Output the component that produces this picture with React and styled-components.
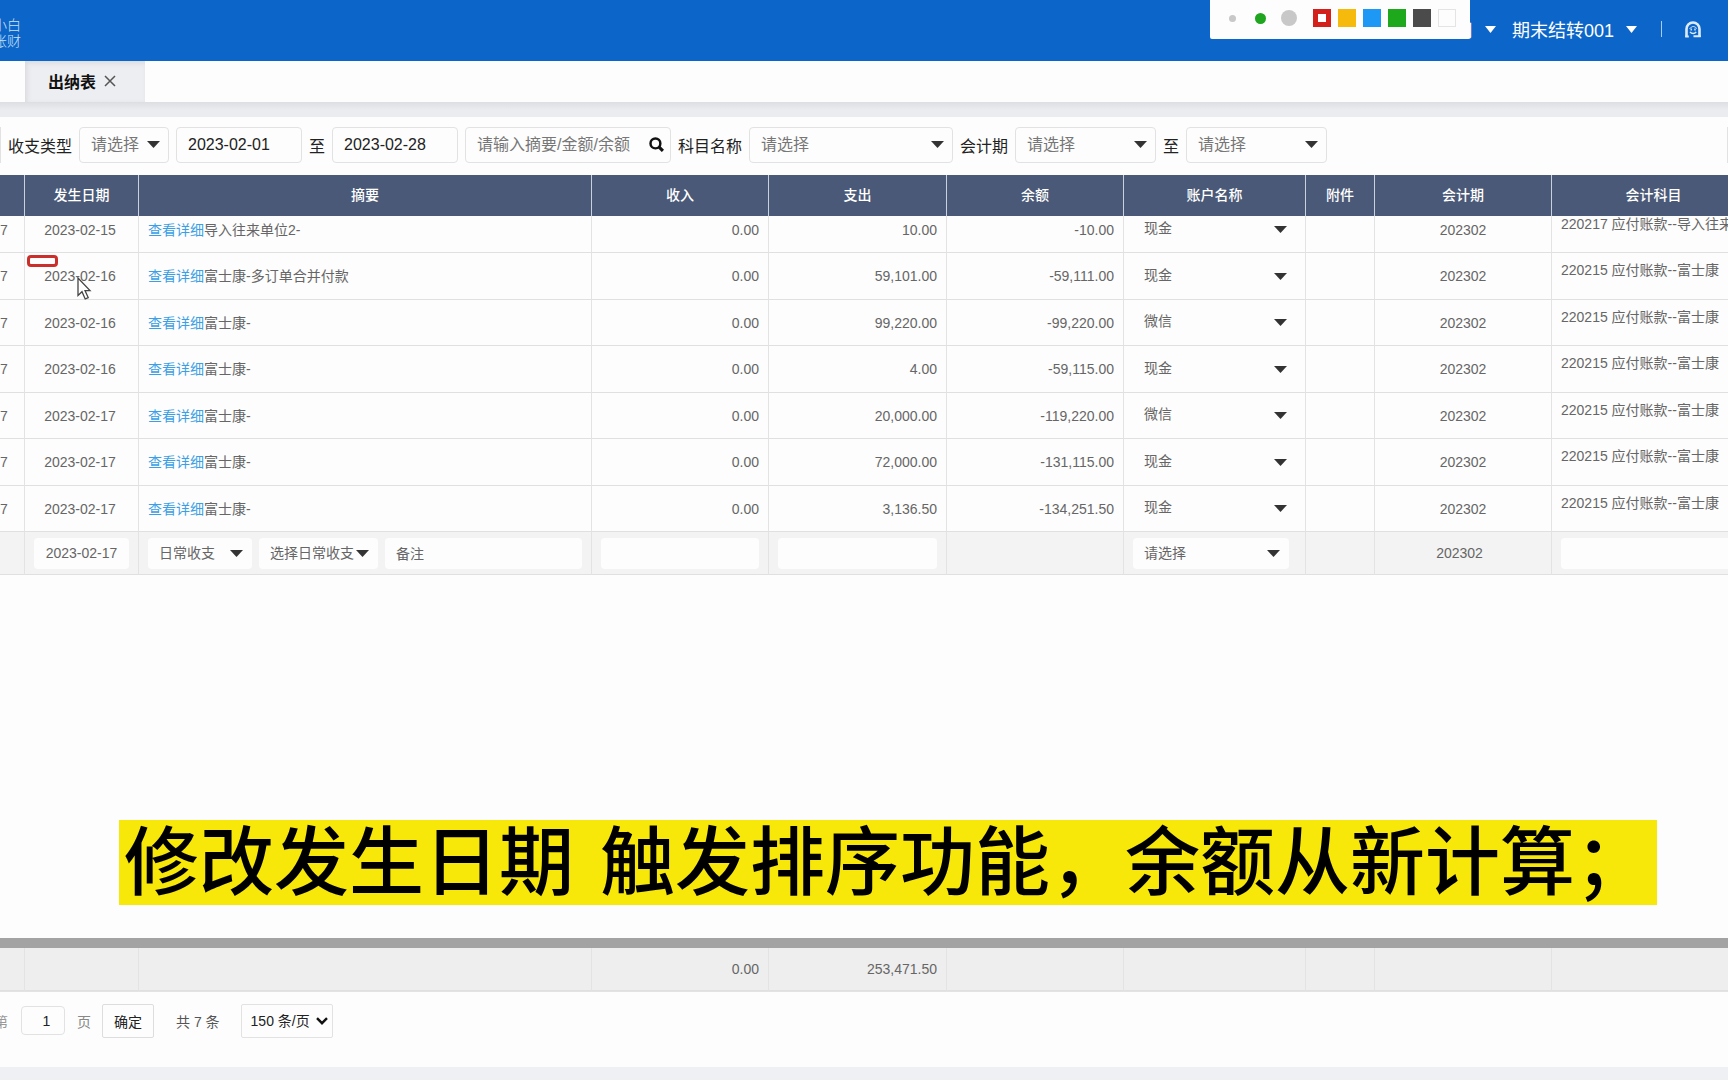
import React from 'react';
import styled, { createGlobalStyle } from 'styled-components';

const GlobalStyle = createGlobalStyle`
* { box-sizing: border-box; }

body {
  margin: 0;
  background: #eef0f3;
  overflow: hidden;
}

body, input, select, button {
  font-family: "Liberation Sans", "Noto Sans CJK SC", sans-serif;
}
`

const Page = styled.div`
position: relative;
display: flex;
flex-direction: column;
min-height: 100vh;
padding-bottom: 13px;
overflow: hidden;
font-size: 14px;
color: #666;
`

const TopBar = styled.header`
display: flex;
align-items: center;
height: 61px;
padding: 0 26px 3px 0;
background: #0c65c8;
color: #fff;
`

const Logo = styled.div`
display: flex;
justify-content: flex-end;
width: 21px;
margin-top: 8px;
overflow: hidden;
font-size: 14px;
font-weight: 300;
line-height: 16px;
white-space: nowrap;
color: #cfe2f8;
`

const UserArea = styled.div`
display: flex;
align-items: center;
margin-left: auto;
font-size: 18px;
line-height: 24px;
`

const MenuButton = styled.button`
display: flex;
align-items: center;
gap: 12px;
margin-right: 16px;
padding: 0;
border: 0;
background: none;
font-size: 18px;
color: #fff;
`

const Divider = styled.span`
width: 1px;
height: 16px;
margin: 0 22px 0 8px;
background: #a9cbf0;
`

const Palette = styled.div`
position: absolute;
top: 0;
right: 258px;
display: flex;
align-items: center;
gap: 7px;
width: 260px;
height: 39px;
padding: 0 14px 3px 12px;
border-radius: 0 0 2px 2px;
background: #fdfdfd;
`

const PenSlot = styled.span`
display: flex;
justify-content: center;
width: 21px;
`

const Pen = styled.span`
width: ${props => props.$size}px;
height: ${props => props.$size}px;
border-radius: 50%;
background: ${props => props.$color};
`

const Swatches = styled.div`
display: flex;
gap: 7px;
margin-left: auto;
`

const Swatch = styled.span`
width: 18px;
height: 18px;
border: ${props => props.$border || '0'};
background: ${props => props.$color};
`

const TabBar = styled.nav`
display: flex;
height: 41px;
padding-left: 25px;
background: #fdfdfd;
`

const Tab = styled.div`
display: flex;
align-items: center;
gap: 8px;
width: 120px;
padding: 0 0 2px 23px;
background: #edeef1;
box-shadow: inset 2px 2px 5px #d9dade;
font-size: 16px;
font-weight: bold;
color: #111;
`

const CloseButton = styled.button`
display: flex;
padding: 0;
border: 0;
background: none;
color: #555;
`

const Gap = styled.div`
height: 15px;
background: linear-gradient(#dddee1, #ebecef 8px);
`

const Filters = styled.form`
display: flex;
align-items: center;
gap: 7px;
height: 58px;
padding-bottom: 3px;
background: #fdfdfd;
font-size: 16px;
color: #222;
`

const FilterLabel = styled.label`
white-space: nowrap;
`

const Field = styled.div`
display: grid;
align-items: center;
flex: none;
width: ${props => props.$width};
`

const Input = styled.input`
grid-area: 1 / 1;
width: 100%;
height: 36px;
padding: 0 11px;
border: 1px solid #e2e2e2;
border-radius: 4px;
outline: 0;
background: #fdfdfd;
font-size: 16px;
color: #222;

&::placeholder {
  color: #777;
  opacity: 1;
}
`

const Select = styled.select`
grid-area: 1 / 1;
width: 100%;
height: 36px;
padding: 0 11px;
border: 1px solid #e2e2e2;
border-radius: 4px;
appearance: none;
background: #fdfdfd;
font-size: 16px;
color: #777;
`

const CaretSlot = styled.span`
grid-area: 1 / 1;
justify-self: end;
display: flex;
margin-right: ${props => props.$gap || 9}px;
pointer-events: none;
color: #333;
`

const CutField = styled.span`
width: 1px;
height: 36px;
background: #e2e2e2;
margin-left: ${props => props.$right ? 'auto' : '0'};
`

const Sheet = styled.main`
flex: 1;
display: flex;
flex-direction: column;
overflow: hidden;
background: #fdfdfd;
`

const Table = styled.table`
width: calc(100% + 28px);
table-layout: fixed;
border-collapse: separate;
border-spacing: 0;
line-height: 20px;
`

const HeadCell = styled.th`
height: 41px;
padding: 0 0 2px;
border-right: 1px solid #c9d0de;
background: #4a5977;
font-weight: 500;
color: #fff;
`

const Scroller = styled.div`
flex: 1;
overflow: hidden;
`

// the list is scrolled down by a few pixels under its head
const Scrolled = styled.div`
margin-top: -9px;
`

const Row = styled.tr`
height: 46px;

&:nth-child(even) {
  height: 47px;
}
`

const Cell = styled.td`
padding: ${props => props.$pad || '0 9px'};
border-right: 1px solid #e3e3e3;
border-bottom: 1px solid #e0e0e0;
text-align: ${props => props.$align || 'left'};
white-space: nowrap;
`

const Link = styled.a`
color: #3a9fe6;
text-decoration: none;
`

const AccountSelect = styled(Select)`
height: 30px;
padding: 0 0 3px;
border: 0;
background: none;
font-size: 14px;
color: #666;
`

const EntryRow = styled.tr`
height: 43px;
background: #f3f3f3;
`

const EntryLine = styled.div`
display: flex;
gap: 7px;
`

const EntryInput = styled(Input)`
display: block;
height: 31px;
border: 0;
font-size: 14px;
color: #666;
text-align: ${props => props.$align || 'left'};
`

const EntrySelect = styled(Select)`
height: 31px;
border: 0;
font-size: 14px;
color: #666;
`

const ScrollBar = styled.div`
height: 10px;
background: #a3a3a3;
`

const TotalRow = styled.tr`
height: 43px;
background: #eee;
`

const Pager = styled.footer`
display: flex;
align-items: center;
height: 76px;
padding-bottom: 18px;
border-top: 1px solid #e3e3e3;
background: #fdfdfd;
`

const PagerText = styled.span`
margin-right: ${props => props.$gap}px;
color: ${props => props.$color || '#555'};
white-space: nowrap;
`

const CutText = styled(PagerText)`
display: flex;
justify-content: flex-end;
width: 8px;
overflow: hidden;
`

const PageInput = styled(Input)`
width: 44px;
height: 29px;
margin-right: 12px;
padding: 0 0 0 7px;
font-size: 14px;
text-align: center;
`

const ConfirmButton = styled.button`
width: 52px;
height: 34px;
margin-right: 22px;
padding: 0;
border: 1px solid #ddd;
border-radius: 2px;
background: #fdfdfd;
font-size: 14px;
color: #222;
`

const SizeSelect = styled(Select)`
height: 34px;
padding: 0 9px;
border-radius: 2px;
font-size: 14px;
color: #222;
`

const Caption = styled.div`
position: absolute;
left: 119px;
right: 71px;
bottom: 175px;
display: flex;
gap: 26px;
height: 85px;
padding-left: 5px;
background: #f8e80a;
font-size: 75px;
font-weight: 500;
line-height: 86px;
white-space: nowrap;
color: #000;
`

const RedMark = styled.span`
position: absolute;
top: 255px;
left: 27px;
width: 31px;
height: 12px;
border: 3px solid #cb2f2b;
border-radius: 4px;
background: #fdfdfd;
`

const Pointer = styled.svg`
position: absolute;
top: 277px;
left: 77px;
`

const columns = [
  { name: '', width: 25 },
  { name: '发生日期', width: 114 },
  { name: '摘要' },
  { name: '收入', width: 177 },
  { name: '支出', width: 178 },
  { name: '余额', width: 177 },
  { name: '账户名称', width: 182 },
  { name: '附件', width: 69 },
  { name: '会计期', width: 177 },
  { name: '会计科目', width: 204 },
]

const rows = [
  { date: '2023-02-15', note: '导入往来单位2-', out: '10.00', balance: '-10.00', account: '现金', subject: '220217 应付账款--导入往来单位2' },
  { date: '2023-02-16', note: '富士康-多订单合并付款', out: '59,101.00', balance: '-59,111.00', account: '现金', subject: '220215 应付账款--富士康' },
  { date: '2023-02-16', note: '富士康-', out: '99,220.00', balance: '-99,220.00', account: '微信', subject: '220215 应付账款--富士康' },
  { date: '2023-02-16', note: '富士康-', out: '4.00', balance: '-59,115.00', account: '现金', subject: '220215 应付账款--富士康' },
  { date: '2023-02-17', note: '富士康-', out: '20,000.00', balance: '-119,220.00', account: '微信', subject: '220215 应付账款--富士康' },
  { date: '2023-02-17', note: '富士康-', out: '72,000.00', balance: '-131,115.00', account: '现金', subject: '220215 应付账款--富士康' },
  { date: '2023-02-17', note: '富士康-', out: '3,136.50', balance: '-134,251.50', account: '现金', subject: '220215 应付账款--富士康' },
]

const Caret = ({ width = 13, height = 7 }) => (
  <svg width={width} height={height} viewBox="0 0 12 7" preserveAspectRatio="none" aria-hidden="true">
    <path d="M0 0h12L6 7z" fill="currentColor" />
  </svg>
)

const SearchIcon = () => (
  <svg width="15" height="15" viewBox="0 0 14 14" fill="none" stroke="#111" aria-hidden="true">
    <circle cx="6" cy="6" r="4.600" strokeWidth="2.300" />
    <path d="M9 9l4 4" strokeWidth="3" />
  </svg>
)

const ServiceIcon = () => (
  <svg width="18" height="17" viewBox="0 0 18 17" fill="none" stroke="#dcebfb" aria-label="客服">
    <path d="M2.500 16V8a6.500 6.500 0 0 1 13 0v8" strokeWidth="2.600" />
    <path d="M1.200 15.500h3.600M9.500 15.200h7.300" strokeWidth="2" />
    <path d="M5.500 7.500C7 6.800 8 5.500 9 5.500s2.500.5 3.800 2" strokeWidth="1" />
    <path d="M7.200 7.500v2M11 7.500v2M6 10.800c1.600 2.200 4.600 2.200 6.200 0" strokeWidth="1.400" />
  </svg>
)

const Columns = () => (
  <colgroup>
    {columns.map((column, i) => <col key={i} width={column.width} />)}
  </colgroup>
)

const Picker = ({ id, label, width, text = '请选择', as: Control = Select }) => (
  <Field $width={width}>
    <Control id={id} aria-label={label}>
      <option>{text}</option>
    </Control>
    <CaretSlot><Caret /></CaretSlot>
  </Field>
)

export default class App extends React.Component {

  renderRow(row, i) {
    return (
      <Row key={i}>
        <Cell $pad="0">7</Cell>
        <Cell $align="center" $pad="0 12px 0 9px">{row.date}</Cell>
        <Cell><Link href="#detail">查看详细</Link>{row.note}</Cell>
        <Cell $align="right">0.00</Cell>
        <Cell $align="right">{row.out}</Cell>
        <Cell $align="right">{row.balance}</Cell>
        <Cell $pad="0 9px 0 20px">
          <Picker label="账户名称" width="100%" text={row.account} as={AccountSelect} />
        </Cell>
        <Cell />
        <Cell $align="center">202302</Cell>
        <Cell $pad="0 9px 12px">{row.subject}</Cell>
      </Row>
    )
  }

  render() {
    return (
      <Page>
        <GlobalStyle />

        <TopBar>
          <Logo><div>小白<br />账财</div></Logo>
          <UserArea>
            <MenuButton>公司<Caret width={11} /></MenuButton>
            <MenuButton>期末结转001<Caret width={11} /></MenuButton>
            <Divider />
            <ServiceIcon />
          </UserArea>
        </TopBar>

        <TabBar>
          <Tab>
            出纳表
            <CloseButton aria-label="关闭">
              <svg width="12" height="12" viewBox="0 0 12 12" stroke="currentColor" strokeWidth="1.500">
                <path d="M1 1l10 10M11 1L1 11" />
              </svg>
            </CloseButton>
          </Tab>
        </TabBar>
        <Gap />

        <Filters>
          <CutField />
          <FilterLabel htmlFor="type">收支类型</FilterLabel>
          <Picker id="type" width="90px" />
          <Field $width="126px"><Input aria-label="开始日期" defaultValue="2023-02-01" /></Field>
          <span>至</span>
          <Field $width="126px"><Input aria-label="结束日期" defaultValue="2023-02-28" /></Field>
          <Field $width="206px">
            <Input aria-label="搜索" placeholder="请输入摘要/金额/余额" />
            <CaretSlot $gap={7}><SearchIcon /></CaretSlot>
          </Field>
          <FilterLabel htmlFor="subject">科目名称</FilterLabel>
          <Picker id="subject" width="204px" />
          <FilterLabel htmlFor="period">会计期</FilterLabel>
          <Picker id="period" width="141px" />
          <span>至</span>
          <Picker label="会计期止" width="141px" />
          <CutField $right />
        </Filters>

        <Sheet>
          <Table>
            <Columns />
            <thead>
              <tr>{columns.map((column, i) => <HeadCell key={i}>{column.name}</HeadCell>)}</tr>
            </thead>
          </Table>

          <Scroller>
            <Scrolled>
              <Table>
                <Columns />
                <tbody>
                  {rows.map(this.renderRow)}
                  <EntryRow>
                    <Cell />
                    <Cell><EntryInput aria-label="发生日期" $align="center" defaultValue="2023-02-17" /></Cell>
                    <Cell>
                      <EntryLine>
                        <Picker label="收支" width="104px" text="日常收支" as={EntrySelect} />
                        <Picker label="日常收支" width="119px" text="选择日常收支" as={EntrySelect} />
                        <EntryInput aria-label="备注" defaultValue="备注" />
                      </EntryLine>
                    </Cell>
                    <Cell><EntryInput aria-label="收入" /></Cell>
                    <Cell><EntryInput aria-label="支出" /></Cell>
                    <Cell />
                    <Cell $pad="0 16px 0 9px">
                      <Picker label="账户名称" width="100%" as={EntrySelect} />
                    </Cell>
                    <Cell />
                    <Cell $align="center" $pad="0 16px 0 9px">202302</Cell>
                    <Cell><EntryInput aria-label="会计科目" /></Cell>
                  </EntryRow>
                </tbody>
              </Table>
            </Scrolled>
          </Scroller>

          <ScrollBar />
          <Table>
            <Columns />
            <tbody>
              <TotalRow>
                <Cell />
                <Cell />
                <Cell />
                <Cell $align="right">0.00</Cell>
                <Cell $align="right">253,471.50</Cell>
                <Cell />
                <Cell />
                <Cell />
                <Cell />
                <Cell />
              </TotalRow>
            </tbody>
          </Table>
        </Sheet>

        <Pager>
          <CutText $gap={13} $color="#999"><span>第</span></CutText>
          <PageInput aria-label="页码" defaultValue="1" />
          <PagerText $gap={11} $color="#888">页</PagerText>
          <ConfirmButton>确定</ConfirmButton>
          <PagerText $gap={21}>共 7 条</PagerText>
          <Field $width="92px">
            <SizeSelect aria-label="每页条数">
              <option>150 条/页</option>
            </SizeSelect>
            <CaretSlot $gap={5}>
              <svg width="12" height="8" viewBox="0 0 12 8" fill="none" stroke="#111" strokeWidth="2.400">
                <path d="M1 1.200l5 5 5-5" />
              </svg>
            </CaretSlot>
          </Field>
        </Pager>

        <Palette>
          <PenSlot><Pen $size={7} $color="#c8c8c8" /></PenSlot>
          <PenSlot><Pen $size={11} $color="#1fa51f" /></PenSlot>
          <PenSlot><Pen $size={16} $color="#c8c8c8" /></PenSlot>
          <Swatches>
            <Swatch $color="#fff" $border="5px solid #d3201a" />
            <Swatch $color="#f5ba0b" />
            <Swatch $color="#1e98f5" />
            <Swatch $color="#1ea81c" />
            <Swatch $color="#4b4b4b" />
            <Swatch $color="#fdfdfd" $border="1px solid #e4e4e4" />
          </Swatches>
        </Palette>

        <RedMark />
        <Pointer width="15" height="24" viewBox="0 0 15 24">
          <path d="M1 1v17.500l4-3.800 3.200 7.300 3-1.400-3.200-7h5z" fill="#fff" stroke="#444" strokeWidth="1.300" />
        </Pointer>

        <Caption>
          <span>修改发生日期</span>
          <span>触发排序功能，余额从新计算；</span>
        </Caption>
      </Page>
    )
  }

}
